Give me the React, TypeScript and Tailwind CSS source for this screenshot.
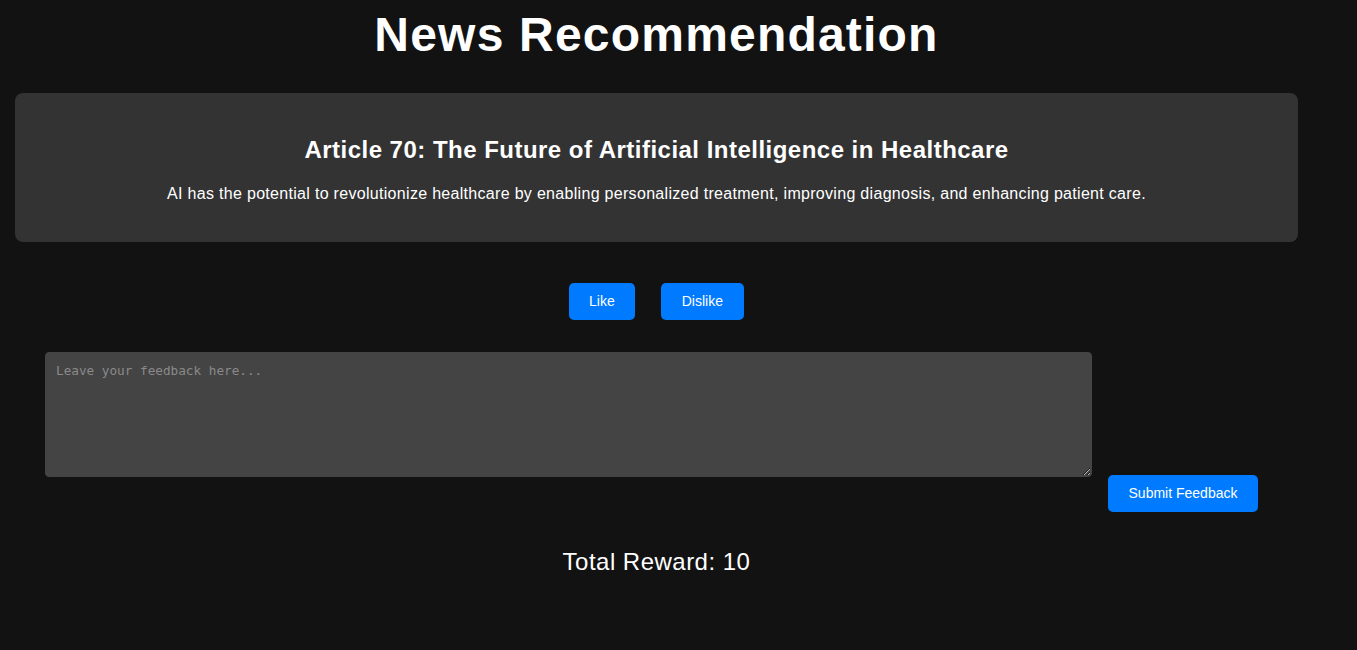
import React from "react";

export default function App() {
  return (
    <div className="min-h-[650px] w-full bg-[#121212] text-white" style={{ fontFamily: '"Liberation Sans", Arial, sans-serif' }}>
      <div className="w-[1313px] flex flex-col">
        <h1 className="pt-[7px] text-center text-[48px] font-bold leading-[55px] tracking-[0.025em]">News Recommendation</h1>
        <div className="mx-[15px] mt-[31px] flex flex-col items-center rounded-[8px] bg-[#333333] pt-[43px] pb-[39px]">
          <h2 className="text-[24px] font-bold leading-[28px] tracking-[0.02em]">Article 70: The Future of Artificial Intelligence in Healthcare</h2>
          <p className="mt-[21px] text-[16px] leading-[18px] tracking-[0.019em]">
            AI has the potential to revolutionize healthcare by enabling personalized treatment, improving diagnosis, and enhancing patient care.
          </p>
        </div>
        <div className="mt-[41px] flex justify-center gap-[26px]">
          <button className="h-[37px] rounded-[5px] bg-[#007bff] px-[20px] text-[14px] text-white">Like</button>
          <button className="h-[37px] rounded-[5px] bg-[#007bff] px-[21px] text-[14px] text-white">Dislike</button>
        </div>
        <div className="mt-[32px] flex items-end pl-[45px]">
          <textarea
            placeholder="Leave your feedback here..."
            className="h-[125px] w-[1047px] rounded-[4px] border border-[#444444] bg-[#444444] px-[10px] pt-[8px] pb-[10px] text-[12.7px] text-white placeholder:text-[#8a8a8a] outline-none"
            style={{ fontFamily: '"DejaVu Sans Mono", "Liberation Mono", monospace' }}
          />
          <button className="mb-[-35px] ml-[16px] h-[37px] w-[150px] rounded-[5px] bg-[#007bff] text-[14px] text-white">Submit Feedback</button>
        </div>
        <div className="mt-[71px] text-center text-[24px] leading-[28px] tracking-[0.02em]">Total Reward: 10</div>
      </div>
    </div>
  );
}
